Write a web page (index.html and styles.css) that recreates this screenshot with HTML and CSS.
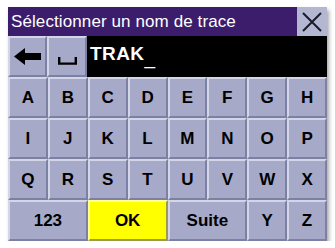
FILE: index.html
```html
<!DOCTYPE html>
<html lang="fr">
<head>
<meta charset="utf-8">
<title>Sélectionner un nom de trace</title>
<link rel="stylesheet" href="styles.css">
</head>
<body>
<div class="screen">
  <div class="header">
    <div class="title">Sélectionner un nom de trace</div>
    <div class="close">
      <svg width="22" height="22" viewBox="0 0 22 22"><path d="M2 2 L20 20 M20 2 L2 20" stroke="#1a1a2a" stroke-width="2" fill="none"/></svg>
    </div>
  </div>
  <div class="entry">
    <div class="key tool">
      <svg width="27" height="17" viewBox="0 0 27 17"><path d="M0 8.5 L11 0 L11 5 L27 5 L27 12 L11 12 L11 17 Z" fill="#000"/></svg>
    </div>
    <div class="key tool space">
      <svg width="19" height="8" viewBox="0 0 19 8"><path d="M1.2 0 L1.2 6.6 L17.8 6.6 L17.8 0" stroke="#000" stroke-width="2.4" fill="none"/></svg>
    </div>
    <div class="field">TRAK<span class="cursor">_</span></div>
  </div>
  <div class="keyboard">
    <div class="key">A</div><div class="key">B</div><div class="key">C</div><div class="key">D</div>
    <div class="key">E</div><div class="key">F</div><div class="key">G</div><div class="key">H</div>
    <div class="key">I</div><div class="key">J</div><div class="key">K</div><div class="key">L</div>
    <div class="key">M</div><div class="key">N</div><div class="key">O</div><div class="key">P</div>
    <div class="key">Q</div><div class="key">R</div><div class="key">S</div><div class="key">T</div>
    <div class="key">U</div><div class="key">V</div><div class="key">W</div><div class="key">X</div>
    <div class="key wide">123</div><div class="key wide ok">OK</div><div class="key wide">Suite</div>
    <div class="key">Y</div><div class="key">Z</div>
  </div>
</div>
</body>
</html>
```
FILE: styles.css
```css
html, body {
  margin: 0;
  padding: 0;
  background: #ffffff;
}
.screen {
  width: 319px;
  height: 234px;
  margin: 7px 0 0 8px;
  display: flex;
  flex-direction: column;
  box-shadow: 2px 3px 4px rgba(0,0,0,0.35);
  font-family: "Liberation Sans", Arial, sans-serif;
}
.header {
  height: 29px;
  display: flex;
  background: #3b1d6c;
}
.title {
  flex: 1;
  color: #ffffff;
  font-size: 17px;
  letter-spacing: 0.1px;
  line-height: 30px;
  padding-left: 3px;
  white-space: nowrap;
}
.close {
  width: 30px;
  background: #b4b7d2;
  display: flex;
  align-items: center;
  justify-content: center;
}
.entry {
  height: 41px;
  display: flex;
  background: #000;
}
.key {
  box-sizing: border-box;
  background: #a6aac8;
  border: 2px solid;
  border-color: #d3d6e9 #7c80a2 #7c80a2 #d3d6e9;
  display: flex;
  align-items: center;
  justify-content: center;
  font-weight: bold;
  font-size: 17px;
  color: #000;
}
.tool {
  width: 39px;
  flex: none;
}
.tool + .tool {
  width: 40px;
}
.space {
  padding-top: 9px;
}
.field {
  flex: 1;
  color: #fff;
  font-weight: bold;
  font-size: 19px;
  letter-spacing: 0.4px;
  line-height: 41px;
  padding-left: 3px;
  margin-top: -3px;
}
.cursor {
  font-weight: normal;
  position: relative;
  top: 4px;
}
.keyboard {
  flex: 1;
  display: grid;
  grid-template-columns: repeat(8, 1fr);
  grid-template-rows: repeat(4, 1fr);
}
.wide {
  grid-column: span 2;
}
.ok {
  background: #ffff00;
  border-color: #ffff99 #9a9a50 #9a9a50 #ffff99;
}
```
